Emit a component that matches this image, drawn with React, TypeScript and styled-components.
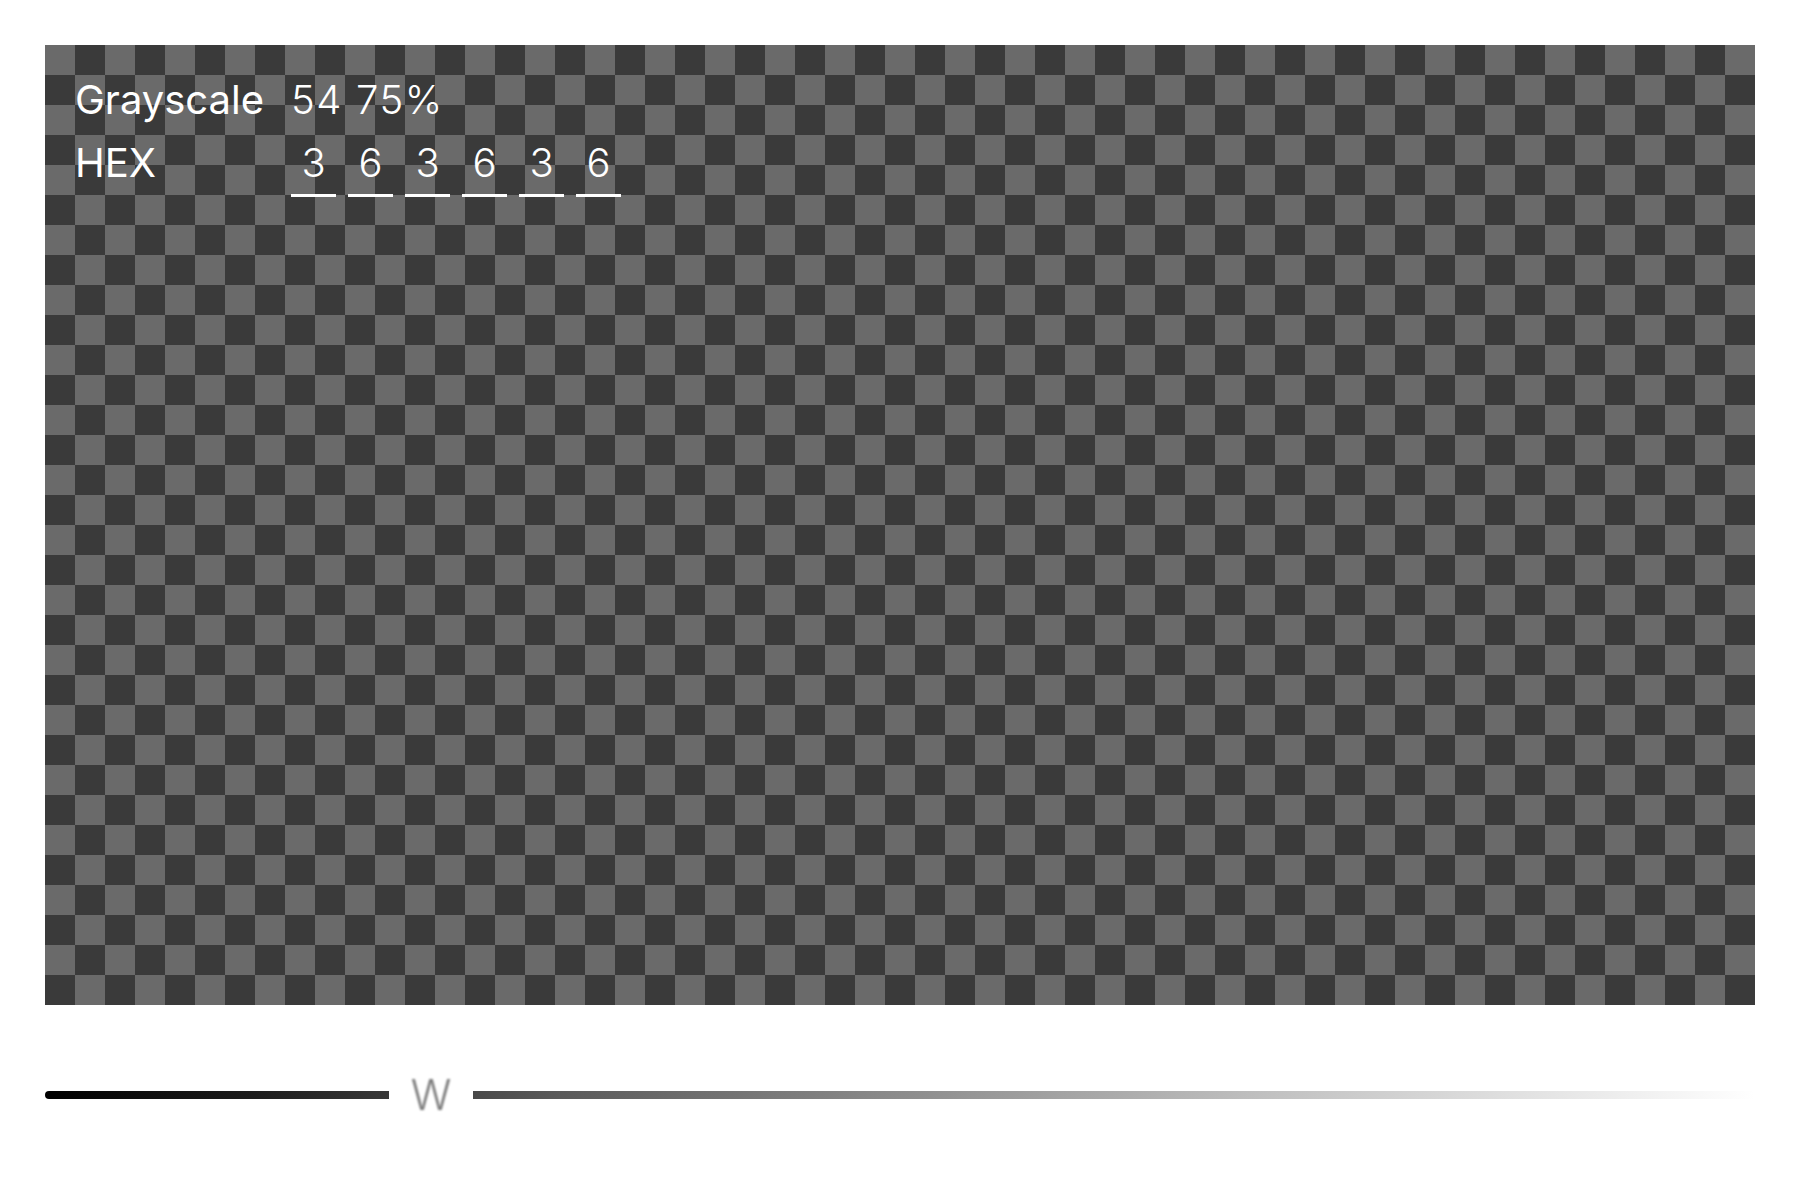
import React from 'react';
import styled, { createGlobalStyle } from 'styled-components';

const TRACK_WIDTH = 1710;

const GlobalStyle = createGlobalStyle`
  html, body {
    margin: 0;
    padding: 0;
    background: #ffffff;
  }
  body {
    font-family: Inter, "Noto Sans", "Liberation Sans", sans-serif;
    -webkit-font-smoothing: antialiased;
  }
`;

const Page = styled.div`
  padding: 45px 45px 0;
`;

const Canvas = styled.div`
  box-sizing: border-box;
  width: ${TRACK_WIDTH}px;
  height: 960px;
  padding: 31px 30px;
  background: repeating-conic-gradient(#3a3a3a 0 25%, #6a6a6a 0 50%) 0 0 / 60px 60px;
`;

const InfoGrid = styled.div`
  display: grid;
  grid-template-columns: 216px auto;
  justify-content: start;
  align-items: start;
  row-gap: 15px;
  color: #ffffff;
  font-size: 40px;
  line-height: 48px;
`;

const Label = styled.div`
  font-weight: 400;
`;

const Value = styled.div`
  font-weight: 300;
  letter-spacing: 1.6px;
`;

const HexCells = styled.div`
  display: flex;
  gap: 12px;
`;

const HexCell = styled.div`
  width: 45px;
  padding-bottom: 7px;
  border-bottom: 3px solid #ffffff;
  text-align: center;
  font-weight: 300;
`;

const Slider = styled.div`
  display: flex;
  align-items: center;
  width: ${TRACK_WIDTH}px;
  height: 48px;
  margin-top: 66px;
`;

const Bar = styled.div<{ $offset: number }>`
  height: 8px;
  background: linear-gradient(to right, #000000 0%, #1c1c1c 12%, #5a5a5a 30%, #bdbdbd 70%, #ffffff 100%);
  background-size: ${TRACK_WIDTH}px 100%;
  background-position: ${(p) => -p.$offset}px 0;
`;

const LeftBar = styled(Bar)`
  width: 344px;
  border-radius: 4px 0 0 4px;
`;

const RightBar = styled(Bar)`
  flex: 1;
`;

const Thumb = styled.div`
  width: 84px;
  text-align: center;
  font-size: 42px;
  line-height: 48px;
  font-weight: 300;
  color: #7a7a7a;
  filter: blur(1.2px);
`;

const hex = ['3', '6', '3', '6', '3', '6'];

export default function App() {
  return (
    <Page>
      <GlobalStyle />
      <Canvas>
        <InfoGrid>
          <Label>Grayscale</Label>
          <Value>54 75%</Value>
          <Label>HEX</Label>
          <HexCells>
            {hex.map((d, i) => (
              <HexCell key={i}>{d}</HexCell>
            ))}
          </HexCells>
        </InfoGrid>
      </Canvas>
      <Slider>
        <LeftBar $offset={0} />
        <Thumb>W</Thumb>
        <RightBar $offset={428} />
      </Slider>
    </Page>
  );
}
